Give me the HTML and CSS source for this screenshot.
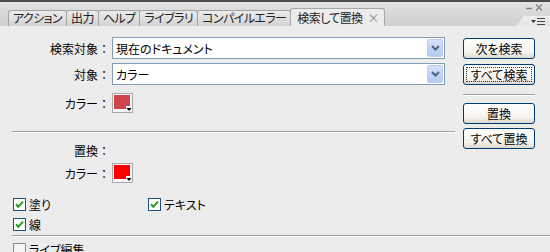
FILE: index.html
```html
<!DOCTYPE html>
<html lang="ja">
<head>
<meta charset="utf-8">
<link rel="stylesheet" href="styles.css">
</head>
<body>
<div class="tabbar">
  <div class="tabs">
    <div class="tab">アクション</div>
    <div class="tab">出力</div>
    <div class="tab">ヘルプ</div>
    <div class="tab">ライブラリ</div>
    <div class="tab">コンパイルエラー</div>
    <div class="tab active">検索して置換<span class="tclose">×</span></div>
  </div>
  <div class="ctrls">
    <div class="winbtns">
      <svg width="22" height="10" viewBox="0 0 22 10"><path d="M3 5.5h6" stroke="#808080" stroke-width="1.5"/><path d="M13 1.5l6 6M19 1.5l-6 6" stroke="#808080" stroke-width="1.2"/></svg>
    </div>
    <div class="flyout">
      <svg width="18" height="9" viewBox="0 0 18 9"><path d="M3 3h5l-2.5 3z" fill="#333"/><path d="M9 1.5h8M9 4.5h8M9 7.5h8" stroke="#444" stroke-width="1"/></svg>
    </div>
  </div>
</div>
<div class="panel">
  <div class="top">
    <div class="form">
      <div class="row sel-row">
        <span class="lbl">検索対象<span class="colon">：</span></span>
        <div class="select"><span class="val">現在のドキュメント</span><span class="arrow"><svg width="9" height="6" viewBox="0 0 9 6"><path d="M1 1l3.5 3.5L8 1" fill="none" stroke="#4d6185" stroke-width="2"/></svg></span></div>
      </div>
      <div class="row sel-row second">
        <span class="lbl">対象<span class="colon">：</span></span>
        <div class="select"><span class="val">カラー</span><span class="arrow"><svg width="9" height="6" viewBox="0 0 9 6"><path d="M1 1l3.5 3.5L8 1" fill="none" stroke="#4d6185" stroke-width="2"/></svg></span></div>
      </div>
      <div class="row sw-row">
        <span class="lbl">カラー<span class="colon">：</span></span>
        <svg class="swatch" width="21" height="20" viewBox="0 0 21 20"><rect x="0.5" y="0.5" width="20" height="19" fill="#f6f6f6" stroke="#a9a9a9"/><rect x="2" y="2" width="16" height="14" fill="#d0444c"/><rect x="14" y="13" width="6" height="6" fill="#f6f6f6"/><path d="M14.5 15h5l-2.5 3z" fill="#000"/></svg>
      </div>
      <div class="divider"></div>
      <div class="row txt-row">
        <span class="lbl">置換<span class="colon">：</span></span>
      </div>
      <div class="row sw-row second-sw">
        <span class="lbl">カラー<span class="colon">：</span></span>
        <svg class="swatch" width="21" height="20" viewBox="0 0 21 20"><rect x="0.5" y="0.5" width="20" height="19" fill="#f6f6f6" stroke="#a9a9a9"/><rect x="2" y="2" width="16" height="14" fill="#ff0000"/><rect x="14" y="13" width="6" height="6" fill="#f6f6f6"/><path d="M14.5 15h5l-2.5 3z" fill="#000"/></svg>
      </div>
    </div>
    <div class="buttons">
      <div class="btn">次を検索</div>
      <div class="btn focus b2">すべて検索</div>
      <div class="bdivider"></div>
      <div class="btn">置換</div>
      <div class="btn b4">すべて置換</div>
    </div>
  </div>
  <div class="checks">
    <div class="crow first">
      <div class="chk wide"><svg width="13" height="13" viewBox="0 0 13 13"><rect x="0.5" y="0.5" width="12" height="12" fill="#fff" stroke="#1c5180"/><path d="M3 6.3l2.3 2.4L10 3.6" fill="none" stroke="#21a121" stroke-width="2"/></svg><span>塗り</span></div>
      <div class="chk"><svg width="13" height="13" viewBox="0 0 13 13"><rect x="0.5" y="0.5" width="12" height="12" fill="#fff" stroke="#1c5180"/><path d="M3 6.3l2.3 2.4L10 3.6" fill="none" stroke="#21a121" stroke-width="2"/></svg><span>テキスト</span></div>
    </div>
    <div class="crow">
      <div class="chk"><svg width="13" height="13" viewBox="0 0 13 13"><rect x="0.5" y="0.5" width="12" height="12" fill="#fff" stroke="#1c5180"/><path d="M3 6.3l2.3 2.4L10 3.6" fill="none" stroke="#21a121" stroke-width="2"/></svg><span>線</span></div>
    </div>
    <div class="fdivider"></div>
    <div class="crow live">
      <div class="chk"><svg width="13" height="13" viewBox="0 0 13 13"><rect x="0.5" y="0.5" width="12" height="12" fill="#f4f4f4" stroke="#8a8a8a"/></svg><span>ライブ編集</span></div>
    </div>
  </div>
</div>
</body>
</html>
```
FILE: styles.css
```css
* { box-sizing: border-box; }
html, body { margin: 0; padding: 0; }
body {
  width: 550px;
  height: 252px;
  overflow: hidden;
  background: #ececec;
  font-family: "Noto Sans CJK JP", sans-serif;
  font-size: 12px;
  font-feature-settings: "palt";
  color: #000;
}
.tabbar {
  height: 26px;
  border-top: 2px solid #4b4b4b;
  background: linear-gradient(#e2e2e2, #cfcfcf);
  display: flex;
  align-items: flex-end;
}
.tabs {
  display: flex;
  align-items: flex-end;
  padding-left: 8px;
}
.tab {
  height: 16px;
  padding: 0 4px;
  border: 1px solid #a3a3a3;
  border-bottom: none;
  border-radius: 3px 3px 0 0;
  background: linear-gradient(#ebebeb, #d3d3d3);
  color: #222;
  line-height: 14px;
  letter-spacing: -0.6px;
  white-space: nowrap;
  margin-right: -1px;
}
.tab.active {
  height: 18px;
  background: #ececec;
  line-height: 17px;
  padding: 0 5px 0 6px;
  border-color: #a8a8a8;
}
.tclose {
  color: #8a8a8a;
  margin-left: 5px;
  font-size: 12px;
}
.ctrls {
  margin-left: auto;
  align-self: stretch;
  width: 34px;
  display: flex;
  flex-direction: column;
}
.winbtns {
  height: 12px;
  display: flex;
  justify-content: flex-end;
  padding-right: 5px;
  padding-top: 1px;
}
.flyout {
  flex: 1;
  background: linear-gradient(#f0f0f0, #e4e4e4);
  clip-path: polygon(0 100%, 8px 2px, 100% 2px, 100% 100%);
  display: flex;
  justify-content: flex-end;
  align-items: center;
  padding-right: 4px;
  padding-top: 2px;
}
.panel {
  padding-top: 11px;
}
.top {
  display: flex;
  padding-left: 12px;
}
.form {
  width: 443px;
}
.row {
  display: flex;
  align-items: center;
}
.lbl {
  width: 98px;
  text-align: right;
  margin-right: 2px;
  white-space: nowrap;
}
.colon {
  font-feature-settings: normal;
}
.sel-row { height: 22px; }
.sel-row.second { margin-top: 4px; }
.select {
  width: 333px;
  height: 22px;
  border: 1px solid #7f9db9;
  background: #fff;
  display: flex;
  align-items: center;
  padding-left: 3px;
}
.val { flex: 1; }
.arrow {
  width: 16px;
  height: 18px;
  margin-right: 1px;
  border: 1px solid #bccdf4;
  border-radius: 2px;
  background: linear-gradient(#d5e0fa, #b7caf3);
  display: flex;
  align-items: center;
  justify-content: center;
}
.sw-row { height: 20px; margin-top: 8px; }
.swatch { display: block; }
.divider {
  margin-top: 18px;
  height: 2px;
  border-top: 1px solid #a3a3a3;
  border-bottom: 1px solid #fbfbfb;
}
.txt-row { height: 14px; margin-top: 10px; }
.sw-row.second-sw { margin-top: 6px; }
.buttons {
  width: 72px;
  margin-left: 8px;
  margin-top: 1px;
  display: flex;
  flex-direction: column;
}
.btn {
  height: 21px;
  border: 1px solid #003c74;
  border-radius: 3px;
  background: linear-gradient(#ffffff, #f4f3ee 70%, #dcd7cb);
  text-align: center;
  line-height: 19px;
  white-space: nowrap;
}
.btn.b2 { margin-top: 5px; }
.btn.focus {
  outline: 1px dotted #333;
  outline-offset: -4px;
}
.btn.b4 { margin-top: 4px; }
.bdivider {
  margin-top: 9px;
  margin-bottom: 7px;
  height: 2px;
  border-top: 1px solid #a3a3a3;
  border-bottom: 1px solid #fbfbfb;
}
.checks {
  margin-top: 15px;
}
.crow {
  display: flex;
  height: 13px;
  padding-left: 13px;
}
.crow + .crow { margin-top: 7px; }
.chk {
  display: flex;
  align-items: center;
  white-space: nowrap;
}
.chk svg { display: block; margin-right: 3px; }
.chk.wide { width: 135px; }
.fdivider {
  margin-top: 4px;
  margin-left: 12px;
  height: 2px;
  border-top: 1px solid #a3a3a3;
  border-bottom: 1px solid #fbfbfb;
}
.crow.live { margin-top: 6px; }
```
